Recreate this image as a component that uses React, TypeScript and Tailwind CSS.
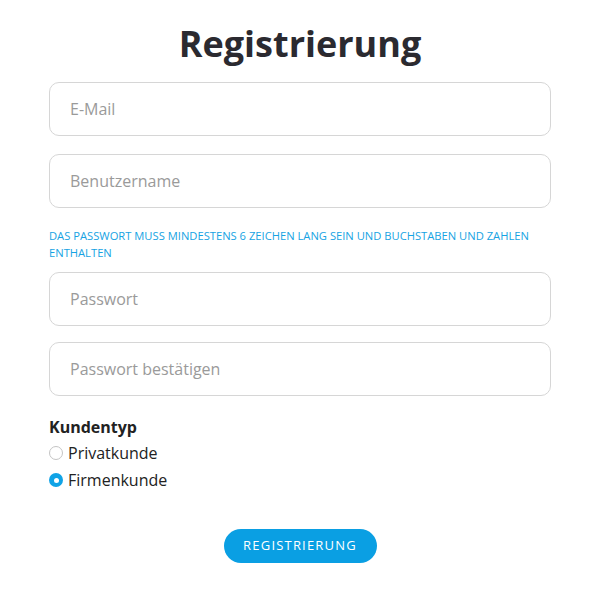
import { useState } from "react";

const font = { fontFamily: '"Open Sans", "Noto Sans", sans-serif' };

const Field = ({ placeholder, type = "text" }: { placeholder: string; type?: string }) => (
  <input
    type={type}
    placeholder={placeholder}
    className="w-full h-[54px] rounded-[10px] border border-[#d6d6d6] bg-white px-5 text-[16px] text-[#333] placeholder:text-[#9a9a9a] outline-none"
  />
);

const Radio = ({ label, checked, onClick }: { label: string; checked: boolean; onClick: () => void }) => (
  <label className="flex items-center gap-[5px] cursor-pointer" onClick={onClick}>
    {checked ? (
      <span className="w-[14px] h-[14px] rounded-full bg-[#10a3e6] flex items-center justify-center">
        <span className="w-[5px] h-[5px] rounded-full bg-white" />
      </span>
    ) : (
      <span className="w-[14px] h-[14px] rounded-full border border-[#c4c4c4] bg-white" />
    )}
    <span className="text-[16px] leading-[24px] text-[#222]">{label}</span>
  </label>
);

export default function App() {
  const [type, setType] = useState<"privat" | "firma">("firma");

  return (
    <div className="min-h-screen bg-white pl-[49px] pt-[20px]" style={font}>
      <div className="w-[502px]">
        <h1 className="text-center text-[36px] font-bold leading-[48px] text-[#2b2a30]">Registrierung</h1>
        <form className="mt-[14px] flex flex-col" onSubmit={(e) => e.preventDefault()}>
          <Field placeholder="E-Mail" />
          <div className="mt-[18px]">
            <Field placeholder="Benutzername" />
          </div>
          <p className="mt-[19px] text-[11.2px] leading-[17px] uppercase text-[#16a3e3]">
            Das Passwort muss mindestens 6 Zeichen lang sein und Buchstaben und Zahlen enthalten
          </p>
          <div className="mt-[11px]">
            <Field placeholder="Passwort" type="password" />
          </div>
          <div className="mt-[16px]">
            <Field placeholder="Passwort bestätigen" type="password" />
          </div>
          <div className="mt-[19px] text-[16px] leading-[24px] font-bold text-[#222]">Kundentyp</div>
          <div className="mt-[2px] flex flex-col gap-[3px]">
            <Radio label="Privatkunde" checked={type === "privat"} onClick={() => setType("privat")} />
            <Radio label="Firmenkunde" checked={type === "firma"} onClick={() => setType("firma")} />
          </div>
          <div className="mt-[37px] flex justify-center">
            <button
              type="submit"
              className="h-[34px] w-[153px] rounded-full bg-[#0a9fe3] text-[13px] uppercase tracking-[1.2px] text-white"
            >
              Registrierung
            </button>
          </div>
        </form>
      </div>
    </div>
  );
}
